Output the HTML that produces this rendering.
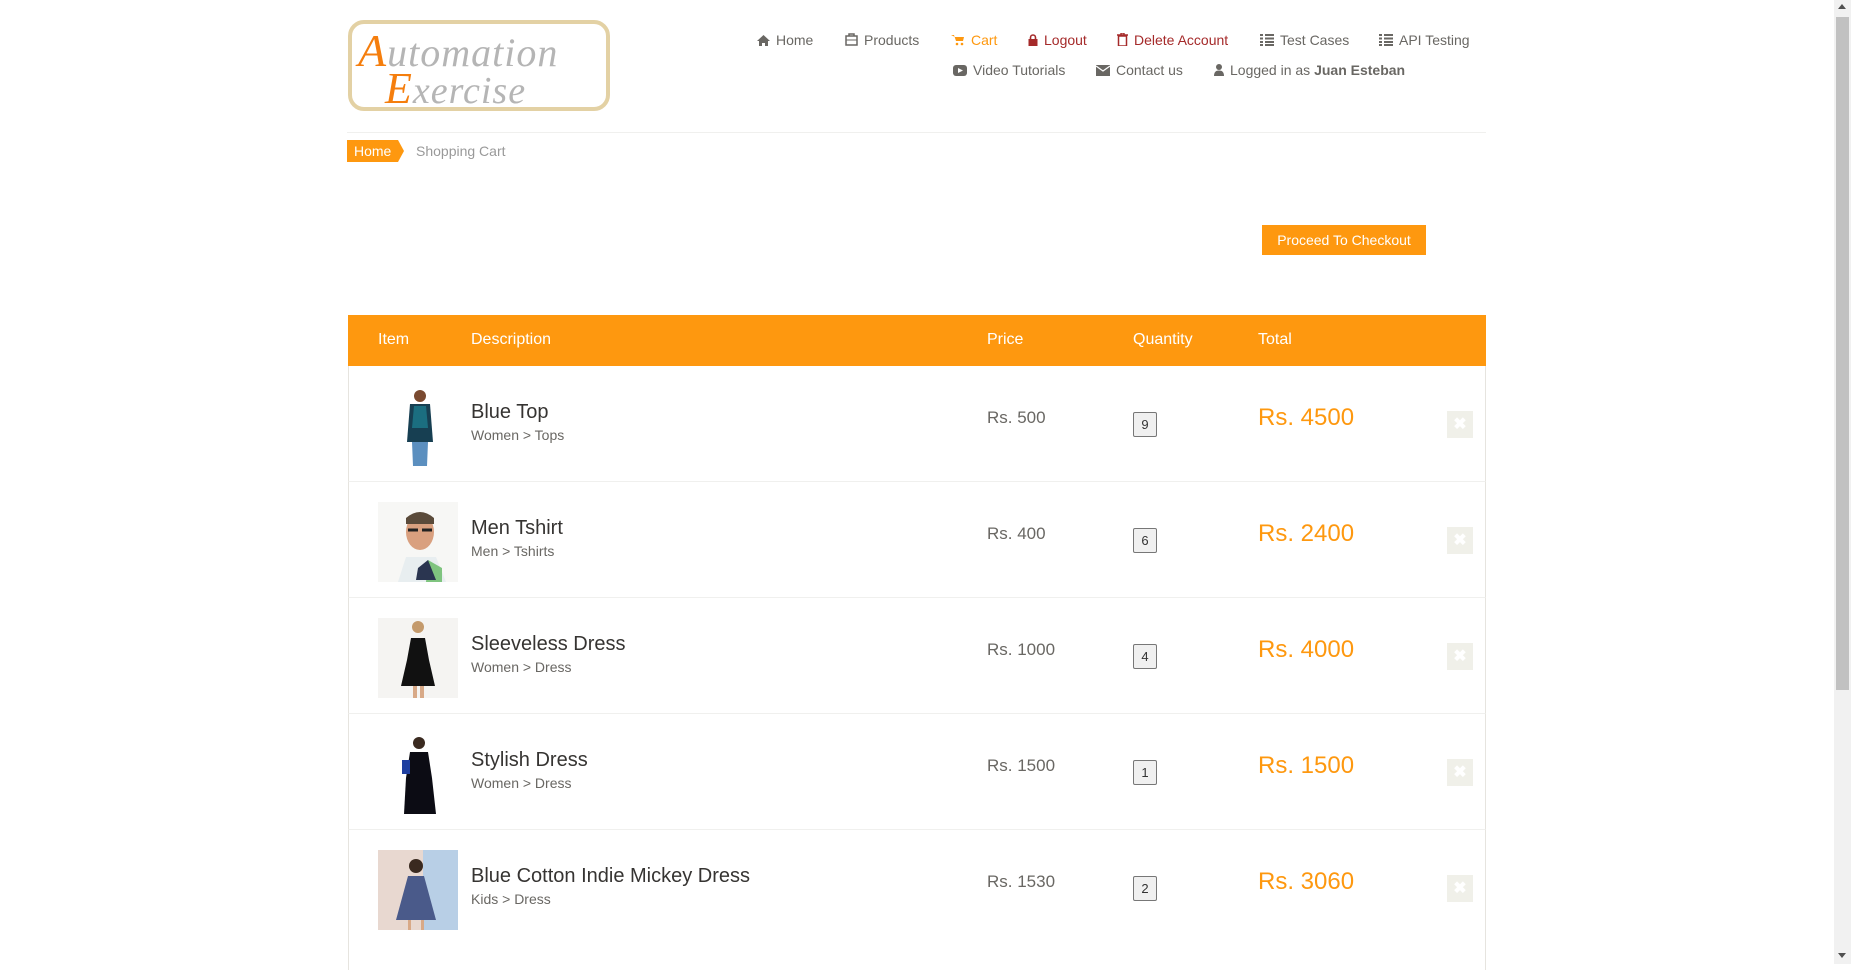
<!DOCTYPE html>
<html><head><meta charset="utf-8"><style>
*{box-sizing:border-box;margin:0;padding:0}
body{width:1851px;height:964px;overflow:hidden;background:#fff;font-family:"Liberation Sans",Arial,sans-serif;color:#696763;position:relative}
.a{position:absolute;white-space:nowrap}
.nav{font-size:14px;color:#696763}
.nav svg{vertical-align:-1px;margin-right:6px}
.th{color:#fff;font-size:16px;top:331px}
.name{font-size:20px;color:#363432}
.cat{font-size:14px;color:#696763}
.price{font-size:17px;color:#696763}
.qty{width:24px;height:25px;border:1px solid #777;background:#f0f0f0;border-radius:2px;font-size:13px;color:#333;text-align:center;line-height:23px}
.tot{font-size:24px;color:#FE980F}
.del{width:26px;height:27px;background:#F0F0E9;color:#fff;font-size:16px;text-align:center;line-height:27px;font-weight:bold}
.row{left:348px;width:1138px;height:116px;border-left:1px solid #e6e4df;border-right:1px solid #e6e4df;border-bottom:1px solid #f0f0ee}
</style></head><body>
<!-- logo -->
<div class="a" style="left:348px;top:20px;width:262px;height:91px;border:4px solid #e3d1a4;border-radius:16px;background:#fff"></div>
<div class="a" style="left:358px;top:24px;font-family:'Liberation Serif',serif;font-style:italic;font-size:40px;color:#b5b5b5;letter-spacing:1px"><span style="color:#f57e0d;font-size:46px">A</span>utomation</div>
<div class="a" style="left:385px;top:63px;font-family:'Liberation Serif',serif;font-style:italic;font-size:38px;color:#b5b5b5;letter-spacing:1px"><span style="color:#f57e0d;font-size:44px">E</span>xercise</div>
<!-- nav -->
<div class="a nav" style="left:757px;top:32px"><svg width="13" height="11" viewBox="0 0 13 11"><path d="M6.5 0L0 6h2v5h3V8h3v3h3V6h2z" fill="#696763"/></svg>Home</div>
<div class="a nav" style="left:845px;top:32px"><svg width="13" height="13" viewBox="0 0 13 13"><rect x="1" y="3" width="11" height="9" fill="none" stroke="#696763" stroke-width="1.5"/><path d="M4 3V1h5v2" fill="none" stroke="#696763" stroke-width="1.5"/><path d="M1 7h11" stroke="#696763"/></svg>Products</div>
<div class="a nav" style="left:951px;top:32px;color:#FE980F"><svg width="14" height="12" viewBox="0 0 14 12"><path d="M0 1h3l2 6h7l1-4H4" fill="#FE980F"/><circle cx="6" cy="10" r="1.3" fill="#FE980F"/><circle cx="11" cy="10" r="1.3" fill="#FE980F"/></svg>Cart</div>
<div class="a nav" style="left:1028px;top:32px;color:#a52a2a"><svg width="10" height="12" viewBox="0 0 10 12"><path d="M2.5 5V3.5a2.5 2.5 0 015 0V5" fill="none" stroke="#a52a2a" stroke-width="1.6"/><rect x="0.5" y="5" width="9" height="7" fill="#a52a2a"/></svg>Logout</div>
<div class="a nav" style="left:1117px;top:32px;color:#a52a2a"><svg width="11" height="13" viewBox="0 0 11 13"><path d="M0 2h11M4 2V0h3v2" stroke="#a52a2a" stroke-width="1.4" fill="none"/><rect x="1.5" y="3" width="8" height="10" fill="none" stroke="#a52a2a" stroke-width="1.5"/></svg>Delete Account</div>
<div class="a nav" style="left:1260px;top:32px"><svg width="14" height="12" viewBox="0 0 14 12"><path d="M0 1h3M5 1h9M0 4.5h3M5 4.5h9M0 8h3M5 8h9M0 11h3M5 11h9" stroke="#696763" stroke-width="2"/></svg>Test Cases</div>
<div class="a nav" style="left:1379px;top:32px"><svg width="14" height="12" viewBox="0 0 14 12"><path d="M0 1h3M5 1h9M0 4.5h3M5 4.5h9M0 8h3M5 8h9M0 11h3M5 11h9" stroke="#696763" stroke-width="2"/></svg>API Testing</div>
<div class="a nav" style="left:953px;top:62px"><svg width="14" height="11" viewBox="0 0 14 11"><rect width="14" height="11" rx="3" fill="#696763"/><path d="M5 3l5 2.5L5 8z" fill="#fff"/></svg>Video Tutorials</div>
<div class="a nav" style="left:1096px;top:62px"><svg width="14" height="11" viewBox="0 0 14 11"><rect width="14" height="11" fill="#696763"/><path d="M0 1l7 5 7-5" stroke="#fff" stroke-width="1.3" fill="none"/></svg>Contact us</div>
<div class="a nav" style="left:1214px;top:62px"><svg width="10" height="12" viewBox="0 0 10 12"><circle cx="5" cy="3" r="3" fill="#696763"/><path d="M0 12c0-4 2-5.5 5-5.5s5 1.5 5 5.5z" fill="#696763"/></svg>Logged in as <b>Juan Esteban</b></div>
<div class="a" style="left:347px;top:132px;width:1139px;border-top:1px solid #f0f0ee"></div>
<!-- breadcrumb -->
<div class="a" style="left:347px;top:140px;width:51px;height:22px;background:#FE980F;color:#fff;font-size:14px;line-height:22px;padding-left:7px">Home</div>
<div class="a" style="left:398px;top:140px;width:0;height:0;border-top:11px solid transparent;border-bottom:11px solid transparent;border-left:6px solid #FE980F"></div>
<div class="a" style="left:416px;top:143px;font-size:14px;color:#999">Shopping Cart</div>
<div class="a" style="left:1262px;top:225px;width:164px;height:30px;background:#FE980F;color:#fff;font-size:14px;line-height:30px;text-align:center">Proceed To Checkout</div>
<!-- table -->
<div class="a" style="left:348px;top:315px;width:1138px;height:51px;background:#FE980F"></div>
<div class="a th" style="left:378px">Item</div>
<div class="a th" style="left:471px">Description</div>
<div class="a th" style="left:987px">Price</div>
<div class="a th" style="left:1133px">Quantity</div>
<div class="a th" style="left:1258px">Total</div>

<div class="a row" style="top:366px"></div>
<svg class="a" style="left:378px;top:386px" width="80" height="80" viewBox="0 0 80 80"><rect width="80" height="80" fill="#fff"/><circle cx="42" cy="10" r="6" fill="#7a4a30"/><path d="M32 18h20l3 38H29z" fill="#173f52"/><path d="M36 20h12l2 22H34z" fill="#1b6e80"/><path d="M34 56h16l-1 24h-14z" fill="#5b8fbf"/></svg>
<div class="a name" style="left:471px;top:401px">Blue Top</div>
<div class="a cat" style="left:471px;top:427px">Women &gt; Tops</div>
<div class="a price" style="left:987px;top:408px">Rs. 500</div>
<div class="a qty" style="left:1133px;top:412px">9</div>
<div class="a tot" style="left:1258px;top:404px">Rs. 4500</div>
<div class="a del" style="left:1447px;top:411px">✖</div>

<div class="a row" style="top:482px"></div>
<svg class="a" style="left:378px;top:502px" width="80" height="80" viewBox="0 0 80 80"><rect width="80" height="80" fill="#f7f7f5"/><ellipse cx="42" cy="30" rx="14" ry="18" fill="#d9a07f"/><path d="M28 16q14-12 28 0v6H28z" fill="#5a4a3a"/><path d="M30 28h10M44 28h10" stroke="#222" stroke-width="3"/><path d="M20 80l8-25h30l10 25z" fill="#e8eef0"/><path d="M50 58l14 8v14H48z" fill="#7fc47f"/><path d="M40 66l10-8 8 20H38z" fill="#2a3550"/></svg>
<div class="a name" style="left:471px;top:517px">Men Tshirt</div>
<div class="a cat" style="left:471px;top:543px">Men &gt; Tshirts</div>
<div class="a price" style="left:987px;top:524px">Rs. 400</div>
<div class="a qty" style="left:1133px;top:528px">6</div>
<div class="a tot" style="left:1258px;top:520px">Rs. 2400</div>
<div class="a del" style="left:1447px;top:527px">✖</div>

<div class="a row" style="top:598px"></div>
<svg class="a" style="left:378px;top:618px" width="80" height="80" viewBox="0 0 80 80"><rect width="80" height="80" fill="#f5f4f2"/><circle cx="40" cy="9" r="6" fill="#c49a6c"/><path d="M33 20h14l4 22 6 26H23l6-26z" fill="#111"/><path d="M35 68h4v12h-4zM42 68h4v12h-4z" fill="#d8a987"/></svg>
<div class="a name" style="left:471px;top:633px">Sleeveless Dress</div>
<div class="a cat" style="left:471px;top:659px">Women &gt; Dress</div>
<div class="a price" style="left:987px;top:640px">Rs. 1000</div>
<div class="a qty" style="left:1133px;top:644px">4</div>
<div class="a tot" style="left:1258px;top:636px">Rs. 4000</div>
<div class="a del" style="left:1447px;top:643px">✖</div>

<div class="a row" style="top:714px"></div>
<svg class="a" style="left:378px;top:734px" width="80" height="80" viewBox="0 0 80 80"><rect width="80" height="80" fill="#fff"/><circle cx="41" cy="9" r="6" fill="#3a2a20"/><path d="M32 18h18l4 26 4 36H26l2-36z" fill="#0c0c14"/><rect x="24" y="26" width="8" height="14" fill="#1e3fa0"/></svg>
<div class="a name" style="left:471px;top:749px">Stylish Dress</div>
<div class="a cat" style="left:471px;top:775px">Women &gt; Dress</div>
<div class="a price" style="left:987px;top:756px">Rs. 1500</div>
<div class="a qty" style="left:1133px;top:760px">1</div>
<div class="a tot" style="left:1258px;top:752px">Rs. 1500</div>
<div class="a del" style="left:1447px;top:759px">✖</div>

<div class="a row" style="top:830px;height:140px;border-bottom:none"></div>
<svg class="a" style="left:378px;top:850px" width="80" height="80" viewBox="0 0 80 80"><rect width="80" height="80" fill="#e8d8d0"/><rect x="45" width="35" height="80" fill="#b8cfe6"/><circle cx="38" cy="16" r="7" fill="#3a2a20"/><path d="M30 26h16l12 44H18z" fill="#4a5a8a"/><path d="M30 70h3v10h-3zM43 70h3v10h-3z" fill="#d8a987"/></svg>
<div class="a name" style="left:471px;top:865px">Blue Cotton Indie Mickey Dress</div>
<div class="a cat" style="left:471px;top:891px">Kids &gt; Dress</div>
<div class="a price" style="left:987px;top:872px">Rs. 1530</div>
<div class="a qty" style="left:1133px;top:876px">2</div>
<div class="a tot" style="left:1258px;top:868px">Rs. 3060</div>
<div class="a del" style="left:1447px;top:875px">✖</div>

<div class="a" style="left:1834px;top:0;width:17px;height:964px;background:#f1f1f1"></div>
<div class="a" style="left:1836px;top:17px;width:13px;height:673px;background:#c1c1c1"></div>
<div class="a" style="left:1838px;top:4px;width:0;height:0;border-left:4px solid transparent;border-right:4px solid transparent;border-bottom:5px solid #505050"></div>
<div class="a" style="left:1838px;top:953px;width:0;height:0;border-left:4px solid transparent;border-right:4px solid transparent;border-top:5px solid #505050"></div>
</body></html>
